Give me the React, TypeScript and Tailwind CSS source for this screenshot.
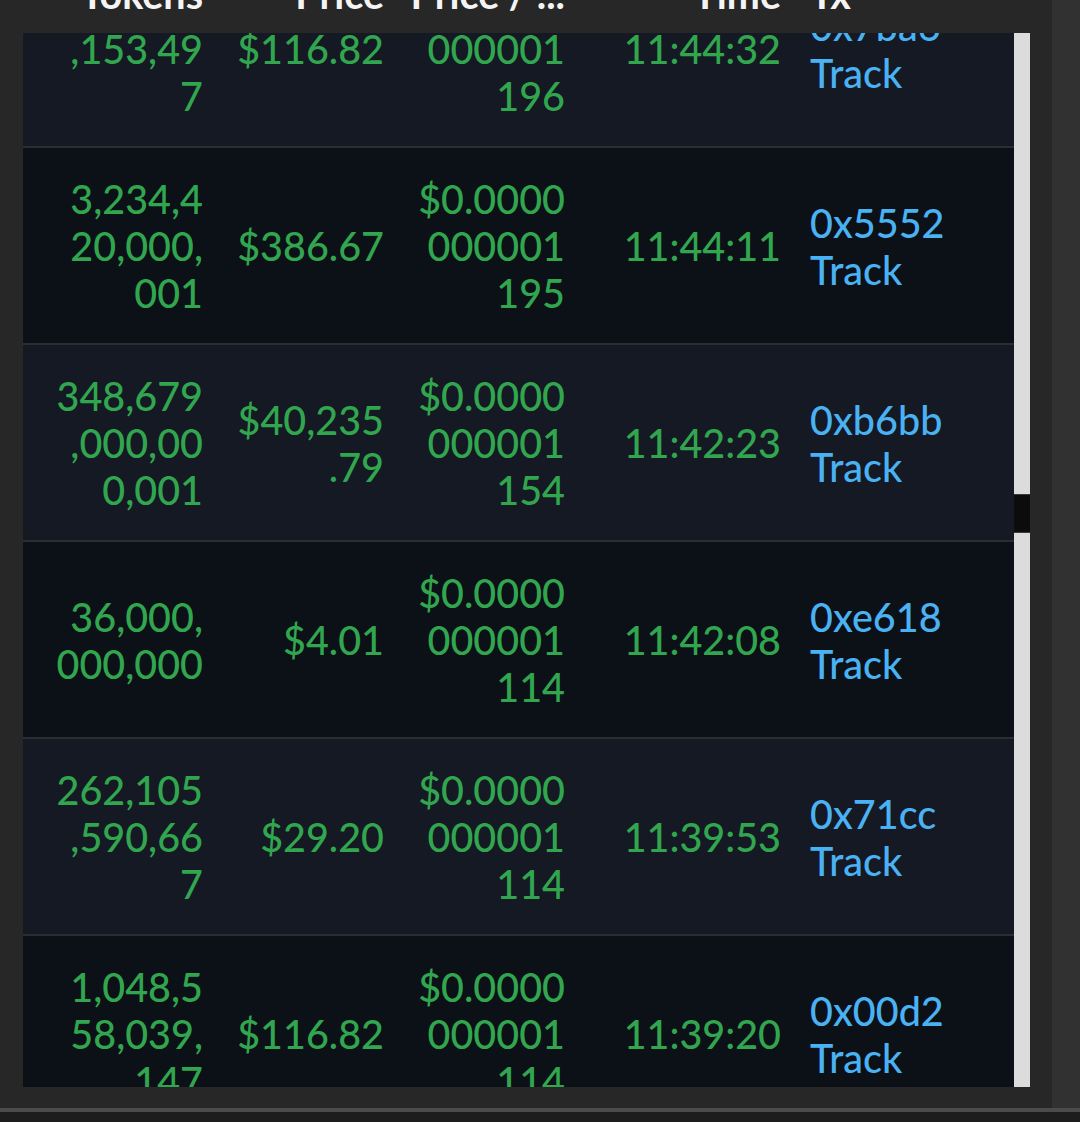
import { useLayoutEffect, useRef } from "react";

interface Trade {
  tokens: string[];
  price: string[];
  unit: string[];
  time: string;
  tx: string;
}

const trades: Trade[] = [
  {
    tokens: ["358,210", ",153,49", "7"],
    price: ["$116.82"],
    unit: ["$0.0000", "000001", "196"],
    time: "11:44:32",
    tx: "0x7ba6",
  },
  {
    tokens: ["3,234,4", "20,000,", "001"],
    price: ["$386.67"],
    unit: ["$0.0000", "000001", "195"],
    time: "11:44:11",
    tx: "0x5552",
  },
  {
    tokens: ["348,679", ",000,00", "0,001"],
    price: ["$40,235", ".79"],
    unit: ["$0.0000", "000001", "154"],
    time: "11:42:23",
    tx: "0xb6bb",
  },
  {
    tokens: ["36,000,", "000,000"],
    price: ["$4.01"],
    unit: ["$0.0000", "000001", "114"],
    time: "11:42:08",
    tx: "0xe618",
  },
  {
    tokens: ["262,105", ",590,66", "7"],
    price: ["$29.20"],
    unit: ["$0.0000", "000001", "114"],
    time: "11:39:53",
    tx: "0x71cc",
  },
  {
    tokens: ["1,048,5", "58,039,", "147"],
    price: ["$116.82"],
    unit: ["$0.0000", "000001", "114"],
    time: "11:39:20",
    tx: "0x00d2",
  },
];

const cols = "grid grid-cols-[188px_181px_181px_229px_1fr]";

const Lines = ({ lines }: { lines: string[] }) => (
  <div className="flex flex-col">
    {lines.map((l, i) => (
      <span key={i} className="whitespace-nowrap">
        {l}
      </span>
    ))}
  </div>
);

export default function App() {
  const bodyRef = useRef<HTMLDivElement>(null);

  useLayoutEffect(() => {
    if (bodyRef.current) bodyRef.current.scrollTop = 82;
  }, []);

  return (
    <div className="w-[1080px] h-[1122px] overflow-hidden bg-[#1d1d1d] flex flex-col font-['Lato',sans-serif] font-medium text-[39.5px] leading-[47px]">
      <div className="flex h-[1108px]">
        <div className="flex-1 bg-[#272727] flex flex-col pl-[23px]">
          {/* Header (page scrolled, only the bottom shows) */}
          <div className="h-[33px] overflow-hidden flex flex-col justify-end">
            <div className={`${cols} w-[991px] pb-[16px] font-bold text-[#f4f4f4]`}>
              <div className="px-2 text-right">Tokens</div>
              <div className="px-2 text-right">Price</div>
              <div className="px-2 text-right whitespace-nowrap">Price / ...</div>
              <div className="pl-2 pr-[21px] text-right">Time</div>
              <div className="px-2">Tx</div>
            </div>
          </div>

          <div className="flex h-[1054px]">
            <div ref={bodyRef} className="w-[991px] overflow-hidden">
              {trades.map((t, i) => (
                <div
                  key={t.tx}
                  className={`${cols} h-[197px] items-center border-b-2 border-[#2a2d32] ${
                    i % 2 === 0 ? "bg-[#141923]" : "bg-[#0c1017]"
                  }`}
                >
                  <div className="px-2 text-right text-[#31a64f]">
                    <Lines lines={t.tokens} />
                  </div>
                  <div className="px-2 text-right text-[#31a64f]">
                    <Lines lines={t.price} />
                  </div>
                  <div className="px-2 text-right text-[#31a64f]">
                    <Lines lines={t.unit} />
                  </div>
                  <div className="pl-2 pr-[21px] text-right text-[#31a64f] whitespace-nowrap">
                    {t.time}
                  </div>
                  <div className="px-2 text-[#4ab2f3] flex flex-col">
                    <span>{t.tx}</span>
                    <span>Track</span>
                  </div>
                </div>
              ))}
            </div>

            {/* scrollbar */}
            <div className="w-[16px] bg-[#dcdcdc] flex flex-col">
              <div className="mt-[461px] h-[39px] bg-[#0c0c0c] border-y border-[#3a3a3a]" />
            </div>
          </div>
        </div>
        <div className="w-[28px] bg-[#313131]" />
      </div>
      <div className="h-[4px] bg-[#4b4b4b]" />
    </div>
  );
}
